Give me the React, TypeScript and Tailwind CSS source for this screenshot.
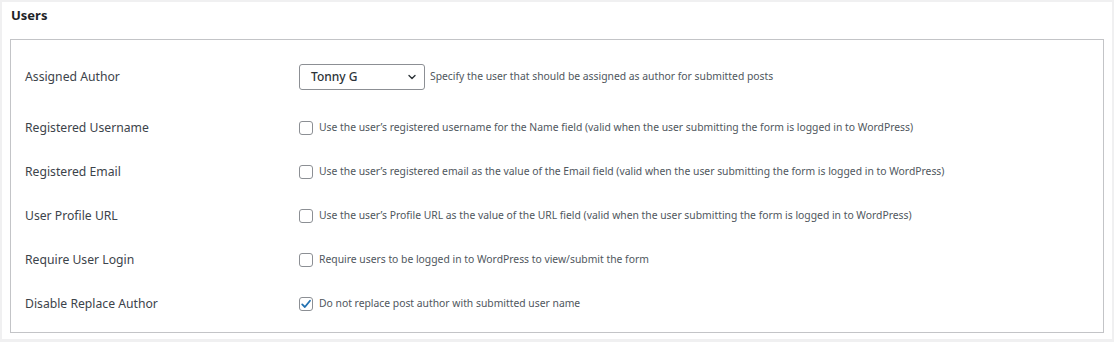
import { useState } from "react";

type Row = {
  label: string;
  text: string;
  checked?: boolean;
};

const rows: Row[] = [
  {
    label: "Registered Username",
    text: "Use the user\u2019s registered username for the Name field (valid when the user submitting the form is logged in to WordPress)",
  },
  {
    label: "Registered Email",
    text: "Use the user\u2019s registered email as the value of the Email field (valid when the user submitting the form is logged in to WordPress)",
  },
  {
    label: "User Profile URL",
    text: "Use the user\u2019s Profile URL as the value of the URL field (valid when the user submitting the form is logged in to WordPress)",
  },
  {
    label: "Require User Login",
    text: "Require users to be logged in to WordPress to view/submit the form",
  },
  {
    label: "Disable Replace Author",
    text: "Do not replace post author with submitted user name",
    checked: true,
  },
];

function CheckBox({ checked }: { checked: boolean }) {
  return (
    <span className="flex h-[14px] w-[14px] shrink-0 items-center justify-center rounded-[3px] border border-[#8c8f94] bg-white">
      {checked && (
        <svg viewBox="0 0 12 12" className="h-[12px] w-[12px]">
          <path d="M2.2 6.4 L4.9 9 L10 2.8" fill="none" stroke="#2271b1" strokeWidth="1.8" strokeLinecap="round" strokeLinejoin="round" />
        </svg>
      )}
    </span>
  );
}

export default function App() {
  const [author] = useState("Tonny G");

  return (
    <div className="h-[342px] w-[1114px] bg-[#f0f0f1] p-[2px] font-['Noto_Sans',sans-serif]">
      <div className="h-[337px] w-[1110px] bg-white px-[8px]">
        {/* Section title */}
        <h2 className="pt-[3px] pl-[1px] text-[13px] leading-[20px] font-bold text-[#1d2327]">Users</h2>

        {/* Settings table */}
        <div className="mt-[14px] border border-[#c3c4c7] pt-[15px] pb-[6px]">
          <div className="mb-[7px] flex h-[44px] items-center">
            <div className="w-[288px] pl-[14px] text-[12.2px] text-[#3c434a]">Assigned Author</div>
            <div className="flex items-center gap-[5px]">
              <div className="flex h-[26px] w-[126px] items-center justify-between rounded-[3px] border border-[#8c8f94] pr-[7px] pl-[11px]">
                <span className="text-[12px] font-medium text-[#2c3338]">{author}</span>
                <svg viewBox="0 0 10 10" className="h-[10px] w-[10px]">
                  <path d="M2 3.5 L5 6.5 L8 3.5" fill="none" stroke="#2c3338" strokeWidth="1.4" strokeLinecap="round" strokeLinejoin="round" />
                </svg>
              </div>
              <span className="text-[10.35px] text-[#50575e]">Specify the user that should be assigned as author for submitted posts</span>
            </div>
          </div>

          {rows.map((row) => (
            <div key={row.label} className="flex h-[44px] items-center">
              <div className="w-[288px] pl-[14px] text-[12.2px] text-[#3c434a]">{row.label}</div>
              <div className="flex items-center gap-[6px]">
                <CheckBox checked={!!row.checked} />
                <span className="text-[10.35px] text-[#50575e]">{row.text}</span>
              </div>
            </div>
          ))}
        </div>
      </div>
    </div>
  );
}
